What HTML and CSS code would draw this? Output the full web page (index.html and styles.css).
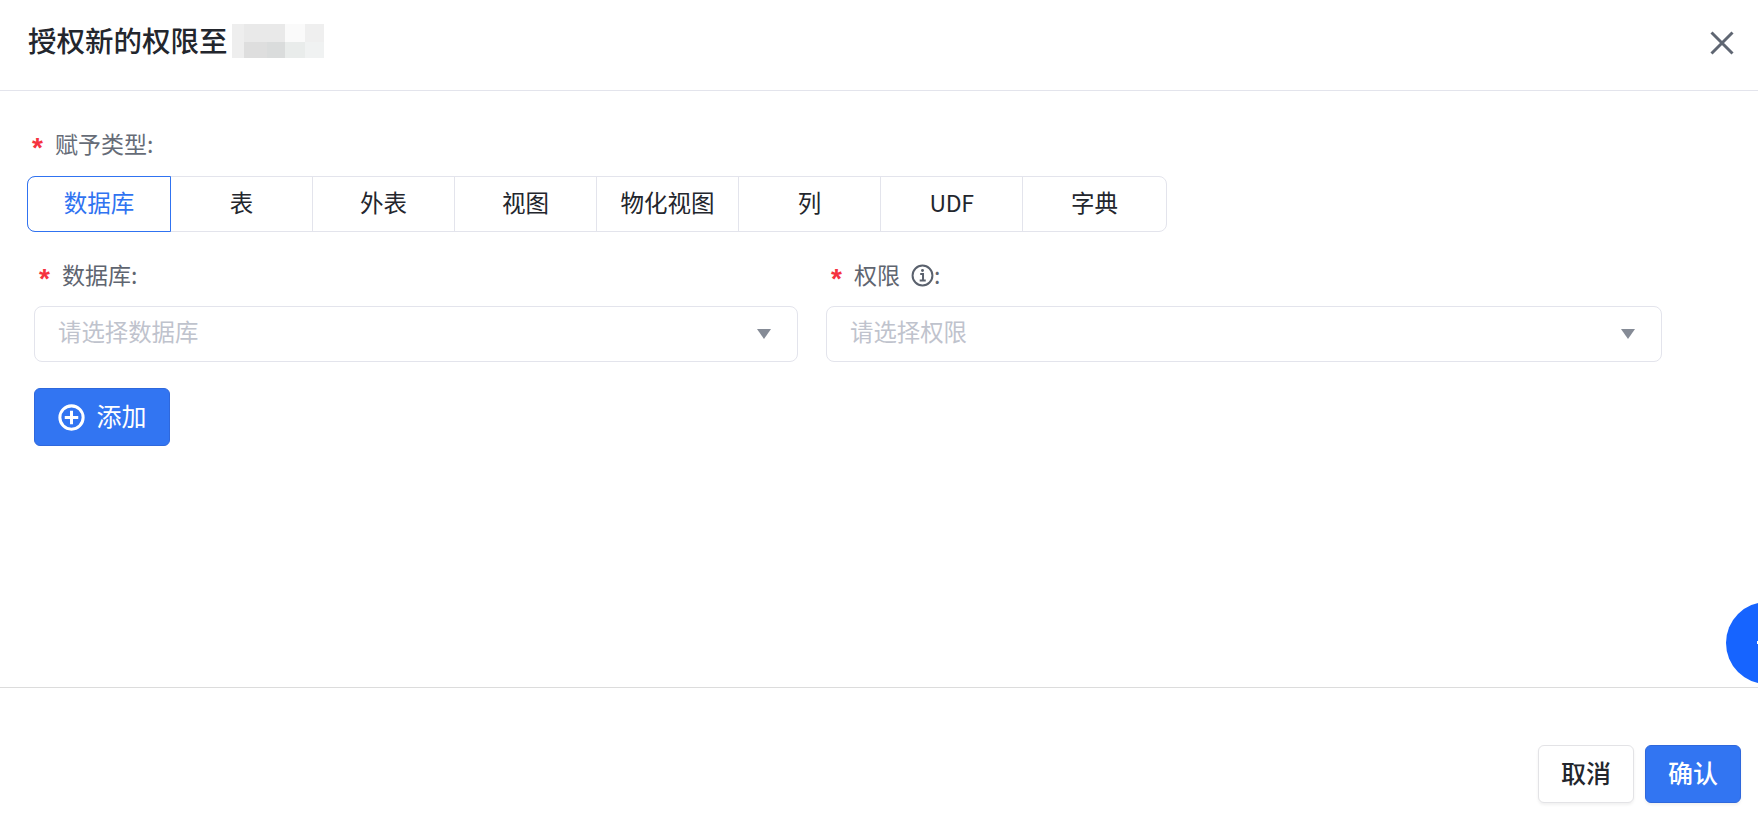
FILE: index.html
```html
<!DOCTYPE html>
<html lang="zh-CN">
<head>
<meta charset="utf-8">
<title>授权新的权限</title>
<link rel="stylesheet" href="styles.css">
</head>
<body>
<div class="modal">
  <header class="modal-header">
    <h1 class="modal-title">授权新的权限至<span class="mosaic"></span></h1>
    <button class="close-btn" aria-label="关闭">
      <svg width="24" height="24" viewBox="0 0 24 24" fill="none" stroke="#5f6672" stroke-width="3"><path d="M1.5 1.5 22.500 22.500M22.500 1.500 1.500 22.500"/></svg>
    </button>
  </header>
  <main class="modal-body">
    <div class="type-field">
      <div class="label"><span class="req">*</span><span>赋予类型:</span></div>
      <div class="segments">
        <div class="seg seg-active"><span>数据库</span></div>
        <div class="seg"><span>表</span></div>
        <div class="seg"><span>外表</span></div>
        <div class="seg"><span>视图</span></div>
        <div class="seg"><span>物化视图</span></div>
        <div class="seg"><span>列</span></div>
        <div class="seg"><span class="latin">UDF</span></div>
        <div class="seg"><span>字典</span></div>
      </div>
    </div>
    <div class="form-row">
      <div class="field field-db">
        <div class="label"><span class="req">*</span><span>数据库:</span></div>
        <div class="select"><span>请选择数据库</span><i class="caret"></i></div>
      </div>
      <div class="field field-priv">
        <div class="label"><span class="req">*</span><span>权限</span>
          <svg class="info" width="23" height="23" viewBox="0 0 22 22" fill="none"><circle cx="11" cy="11" r="9.500" stroke="#5a616d" stroke-width="1.900"/><path d="M8.800 9.500h2.700v6M8.300 15.700h5.800" stroke="#5a616d" stroke-width="1.900"/><circle cx="11" cy="6.300" r="1.400" fill="#5a616d"/></svg><span>:</span></div>
        <div class="select"><span>请选择权限</span><i class="caret"></i></div>
      </div>
    </div>
    <button class="add-btn">
      <svg width="27" height="27" viewBox="0 0 26 26" fill="none" stroke="#fff" stroke-width="2.900"><circle cx="13" cy="13" r="11.200"/><path d="M13 6.500v13M6.500 13h13"/></svg>
      <span>添加</span>
    </button>
  </main>
  <footer class="modal-footer">
    <button class="btn"><span>取消</span></button>
    <button class="btn btn-primary"><span>确认</span></button>
  </footer>
</div>
<div class="float-ball"><i></i></div>
</body>
</html>
```
FILE: styles.css
```css
* { box-sizing: border-box; }
html, body { margin: 0; height: 100%; }
body {
  overflow: hidden;
  background: #fff;
  color: #1f2329;
  font-family: "Noto Sans CJK SC", "Noto Sans", sans-serif;
}
button { font-family: inherit; cursor: pointer; }
.modal { height: 816px; display: flex; flex-direction: column; }
.modal-header {
  height: 91px;
  flex: none;
  border-bottom: 1px solid #e3e4ec;
  display: flex;
  align-items: center;
  justify-content: space-between;
  padding: 0 24px 10px 28px;
}
.modal-title {
  margin: 0;
  font-size: 28.500px;
  font-weight: 500;
  line-height: 40px;
  display: flex;
  align-items: center;
  color: #23262d;
}
.mosaic {
  width: 92px;
  height: 34px;
  margin-left: 4px;
  margin-top: 2px;
  background:
    linear-gradient(90deg, #eeeeee 0 12px, #dedede 12px 35px, #dadcdc 35px 53px, #e9eceb 53px 73px, #f0f2f2 73px) 0 100% / 100% 16px no-repeat,
    linear-gradient(90deg, #eeeeee 0 12px, #e9e9e9 12px 53px, #fafafa 53px 73px, #efefef 73px) 0 0 / 100% 18px no-repeat;
}
.close-btn { border: 0; background: none; padding: 0; display: flex; margin-top: 6px; }
.modal-body { flex: 1; padding: 0 0 0 27px; border-bottom: 1px solid #dcdcdc; }
.type-field { padding-top: 39px; }
.label {
  font-size: 23px;
  line-height: 30px;
  color: #666c77;
  display: flex;
  align-items: center;
}
.label span:not(.req) { position: relative; top: -2px; }
.req {
  color: #f5333f;
  font-family: "Liberation Sans", sans-serif;
  font-size: 28px;
  font-weight: 700;
  line-height: 30px;
  width: 28px;
  padding-left: 5px;
  flex: none;
  position: relative;
  top: 3px;
}
.segments {
  display: flex;
  width: 1140px;
  height: 56px;
  margin-top: 16px;
  border: 1px solid #e3e4ec;
  border-radius: 8px;
}
.seg {
  flex: 0 0 142px;
  margin-top: -1px;
  margin-bottom: -1px;
  border-right: 1px solid #e3e4ec;
  border-top: 1px solid #e3e4ec;
  border-bottom: 1px solid #e3e4ec;
  display: flex;
  align-items: center;
  justify-content: center;
  padding-bottom: 5px;
  font-size: 23.500px;
  color: #23262d;
}
.seg:last-child { border-right: 0; flex: 1; border-top: 0; border-bottom: 0; margin: 0; }
.latin { font-size: 23px; letter-spacing: -0.3px; }
.seg-active {
  flex: 0 0 144px;
  margin-left: -1px;
  border: 1px solid #3073f1;
  border-radius: 8px 0 0 8px;
  color: #3073f1;
}
.form-row { display: flex; gap: 28px; padding-left: 7px; margin-top: 28px; }
.field-db { width: 764px; }
.field-priv { width: 836px; }
.field .label { height: 32px; color: #5f6570; }
.info { margin: 0 0 0 11px; position: relative; top: -1px; }
.select {
  height: 56px;
  margin-top: 14px;
  border: 1px solid #e3e4ec;
  border-radius: 8px;
  display: flex;
  align-items: center;
  justify-content: space-between;
  padding: 0 26px 7px 23px;
  font-size: 23.400px;
  color: #bfc3cd;
}
.caret {
  width: 0;
  height: 0;
  border-left: 7.500px solid transparent;
  border-right: 7.500px solid transparent;
  border-top: 10px solid #858b96;
  position: relative;
  top: 3px;
}
.add-btn {
  margin: 26px 0 0 7px;
  width: 136px;
  height: 58px;
  border: 1px solid #2f68dc;
  border-radius: 6px;
  background: #3275f2;
  color: #fff;
  font-size: 25px;
  display: flex;
  align-items: center;
  justify-content: center;
  gap: 11px;
  padding: 0 0 0 1px;
}
.add-btn span, .btn span { position: relative; top: -2px; }
.modal-footer {
  height: 128px;
  flex: none;
  display: flex;
  justify-content: flex-end;
  gap: 11px;
  padding: 57px 17px 0 0;
}
.btn {
  width: 96px;
  height: 58px;
  border: 1px solid #e3e3e6;
  border-radius: 6px;
  background: #fff;
  color: #23262d;
  font-size: 25px;
  font-weight: 500;
  box-shadow: 0 2px 3px rgba(0,0,0,.06);
  padding: 0;
}
.btn-primary { background: #3275f2; border-color: #2f68dc; color: #fff; }
.float-ball {
  position: absolute;
  left: 1726px;
  top: 602px;
  width: 82px;
  height: 82px;
  border-radius: 50%;
  background: #1664ff;
}
.float-ball i {
  position: absolute;
  left: 31px;
  top: 39px;
  width: 12px;
  height: 3px;
  background: #fff;
}
```
